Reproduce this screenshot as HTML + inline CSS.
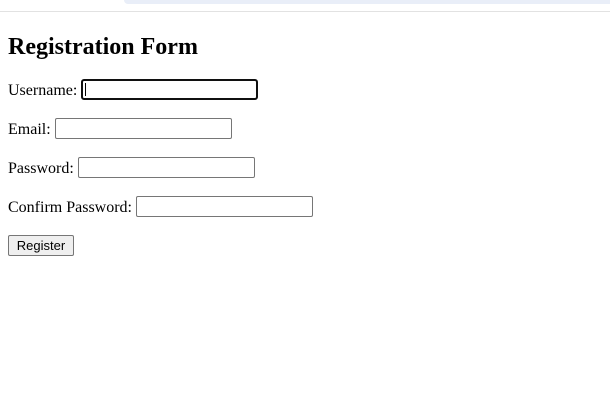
<!DOCTYPE html>
<html><head><meta charset="utf-8"><style>
html,body{margin:0;padding:0;background:#fff;width:610px;height:414px;overflow:hidden;position:relative;font-family:"Liberation Serif",serif;font-size:16px;color:#000}
.strip{position:absolute;left:124px;top:0;width:500px;height:4px;background:#e9eef8;border-bottom-left-radius:8px}
.line{position:absolute;left:0;top:11px;width:610px;height:1px;background:#e2e2e2}
h1{position:absolute;left:8px;top:33px;margin:0;font-size:24px;line-height:28px;font-weight:bold}
.lbl{position:absolute;left:8px;line-height:20px;white-space:nowrap}
.inp{position:absolute;width:175px;height:19px;border:1px solid #767676;border-radius:2px;background:#fff}
.foc{border:2px solid #101010;width:173px;height:17px;border-radius:3px}
.caret{position:absolute;left:2px;top:2px;width:1px;height:13px;background:#000}
.btn{position:absolute;left:8px;top:235px;width:64px;height:19px;border:1px solid #767676;border-radius:2px;background:#efefef;font-family:"Liberation Sans",sans-serif;font-size:13px;line-height:19px;text-align:center}
</style></head><body>
<div class="strip"></div><div class="line"></div>
<h1>Registration Form</h1>
<div class="lbl" style="top:81px">Username:</div>
<div class="inp foc" style="left:81px;top:79px"><div class="caret"></div></div>
<div class="lbl" style="top:120px">Email:</div>
<div class="inp" style="left:55px;top:118px"></div>
<div class="lbl" style="top:159px">Password:</div>
<div class="inp" style="left:78px;top:157px"></div>
<div class="lbl" style="top:198px">Confirm Password:</div>
<div class="inp" style="left:136px;top:196px"></div>
<div class="btn">Register</div>
</body></html>
